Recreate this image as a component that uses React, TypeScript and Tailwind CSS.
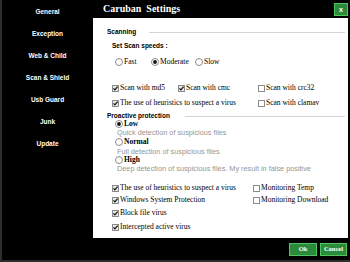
import React from "react";

const serif = { fontFamily: '"Liberation Serif", "Times New Roman", serif' };
const sans = { fontFamily: '"Liberation Sans", Arial, sans-serif' };

function Check({ on }: { on: boolean }) {
  return (
    <svg width="7" height="7" viewBox="0 0 7 7" className="shrink-0">
      <rect x="0.5" y="0.5" width="6" height="6" fill={on ? "#e6e6e6" : "#ffffff"} stroke="#8c8c8c" />
      {on && <path d="M1.5 3.4 L2.9 4.9 L5.6 1.7" stroke="#111" strokeWidth="1.2" fill="none" />}
    </svg>
  );
}

function Radio({ on }: { on: boolean }) {
  return (
    <svg width="8" height="8" viewBox="0 0 8 8" className="shrink-0">
      <circle cx="4" cy="4" r="3.5" fill="#fff" stroke="#8c8c8c" />
      {on && <circle cx="4" cy="4" r="1.9" fill="#111" />}
    </svg>
  );
}

function CB({ on, label }: { on: boolean; label: string }) {
  return (
    <div className="flex items-center gap-[1px]">
      <Check on={on} />
      <span className="text-[7.5px] leading-none text-black whitespace-nowrap" style={serif}>
        {label}
      </span>
    </div>
  );
}

export default function App() {
  const side = ["General", "Exception", "Web & Child", "Scan & Shield", "Usb Guard", "Junk", "Update"];
  return (
    <div className="w-[350px] h-[262px] bg-black flex border-l-2 border-b-2 border-[#2e2e2e] overflow-hidden">
      <div className="w-[91px] flex flex-col pt-[1px]">
        {side.map((s) => (
          <div
            key={s}
            className="h-[22px] flex items-center justify-center text-white font-bold text-[6.5px]"
            style={sans}
          >
            {s}
          </div>
        ))}
      </div>
      <div className="flex-1 flex flex-col">
        <div className="h-[18px] flex items-center justify-between pl-[10px] pr-[2px]">
          <span className="text-white font-bold text-[10px] whitespace-pre leading-none" style={serif}>
            Caruban  Settings
          </span>
          <div
            className="w-[14px] h-[13px] bg-[#2c8a3c] border border-[#4fc75d] flex items-center justify-center text-white font-bold text-[7px] leading-none"
            style={sans}
          >
            x
          </div>
        </div>
        <div className="h-[220px] bg-white mr-[2px] flex flex-col pt-[10px]">
          <div className="h-[8px] flex items-center pl-[14px] pr-[3px]">
            <span className="text-[6.5px] font-bold text-black whitespace-nowrap" style={sans}>
              Scanning
            </span>
            <div className="flex-1 ml-[13px] h-[1px] bg-[#d4d4d4]" />
          </div>
          <div className="h-[8px] mt-[6px] flex items-center pl-[19px]">
            <span className="text-[6.5px] font-bold text-black" style={sans}>
              Set Scan speeds :
            </span>
          </div>
          <div className="h-[8px] mt-[8px] flex items-center pl-[22px]">
            <div className="w-[36px] flex items-center gap-[1px]">
              <Radio on={false} />
              <span className="text-[7.5px] leading-none" style={serif}>Fast</span>
            </div>
            <div className="w-[44px] flex items-center gap-[1px]">
              <Radio on={true} />
              <span className="text-[7.5px] leading-none" style={serif}>Moderate</span>
            </div>
            <div className="flex items-center gap-[1px]">
              <Radio on={false} />
              <span className="text-[7.5px] leading-none" style={serif}>Slow</span>
            </div>
          </div>
          <div className="h-[8px] mt-[18px] flex items-center pl-[19px]">
            <div className="w-[66px]"><CB on label="Scan with md5" /></div>
            <div className="w-[80px]"><CB on label="Scan with cmc" /></div>
            <CB on={false} label="Scan with crc32" />
          </div>
          <div className="h-[8px] mt-[7px] flex items-center pl-[19px]">
            <div className="w-[146px]"><CB on label="The use of heuristics to suspect a virus" /></div>
            <CB on={false} label="Scan with clamav" />
          </div>
          <div className="h-[8px] mt-[5px] flex items-center pl-[14px] pr-[3px]">
            <span className="text-[6.5px] font-bold text-black whitespace-nowrap" style={sans}>
              Proactive protection
            </span>
            <div className="flex-1 ml-[15px] h-[1px] bg-[#d4d4d4]" />
          </div>
          <div className="h-[8px] mt-[0px] flex items-center pl-[22px] gap-[1px]">
            <Radio on={true} />
            <span className="text-[7.5px] font-bold leading-none" style={serif}>Low</span>
          </div>
          <div className="h-[8px] mt-[1px] flex items-center pl-[24px]">
            <span className="text-[7.3px] text-[#959595] leading-none whitespace-nowrap" style={sans}>
              Quick detection of suspicious files
            </span>
          </div>
          <div className="h-[8px] mt-[1px] flex items-center pl-[22px] gap-[1px]">
            <Radio on={false} />
            <span className="text-[7.5px] font-bold leading-none" style={serif}>Normal</span>
          </div>
          <div className="h-[8px] mt-[2px] flex items-center pl-[24px]">
            <span className="text-[7.3px] text-[#959595] leading-none whitespace-nowrap" style={sans}>
              Full detection of suspicious files
            </span>
          </div>
          <div className="h-[8px] mt-[0px] flex items-center pl-[22px] gap-[1px]">
            <Radio on={false} />
            <span className="text-[7.5px] font-bold leading-none" style={serif}>High</span>
          </div>
          <div className="h-[8px] mt-[1px] flex items-center pl-[24px]">
            <span className="text-[7.3px] text-[#959595] leading-none whitespace-nowrap" style={sans}>
              Deep detection of suspicious files. My result in false positive
            </span>
          </div>
          <div className="h-[8px] mt-[11px] flex items-center pl-[19px]">
            <div className="w-[141px]"><CB on label="The use of heuristics to suspect a virus" /></div>
            <CB on={false} label="Monitoring Temp" />
          </div>
          <div className="h-[8px] mt-[4px] flex items-center pl-[19px]">
            <div className="w-[141px]"><CB on label="Windows System Protection" /></div>
            <CB on={false} label="Monitoring Download" />
          </div>
          <div className="h-[8px] mt-[5px] flex items-center pl-[19px]">
            <CB on label="Block file virus" />
          </div>
          <div className="h-[8px] mt-[6px] flex items-center pl-[19px]">
            <CB on label="Intercepted active virus" />
          </div>
        </div>
        <div className="flex-1 flex items-center justify-end gap-[3px] pr-[3px] pt-[1px]">
          <div
            className="w-[28px] h-[13px] bg-[#2c8a3c] border border-[#4fc75d] flex items-center justify-center text-white font-bold text-[6.5px] leading-none"
            style={serif}
          >
            Ok
          </div>
          <div
            className="w-[27px] h-[13px] bg-[#2c8a3c] border border-[#4fc75d] flex items-center justify-center text-white font-bold text-[6.5px] leading-none"
            style={serif}
          >
            Cancel
          </div>
        </div>
      </div>
    </div>
  );
}
